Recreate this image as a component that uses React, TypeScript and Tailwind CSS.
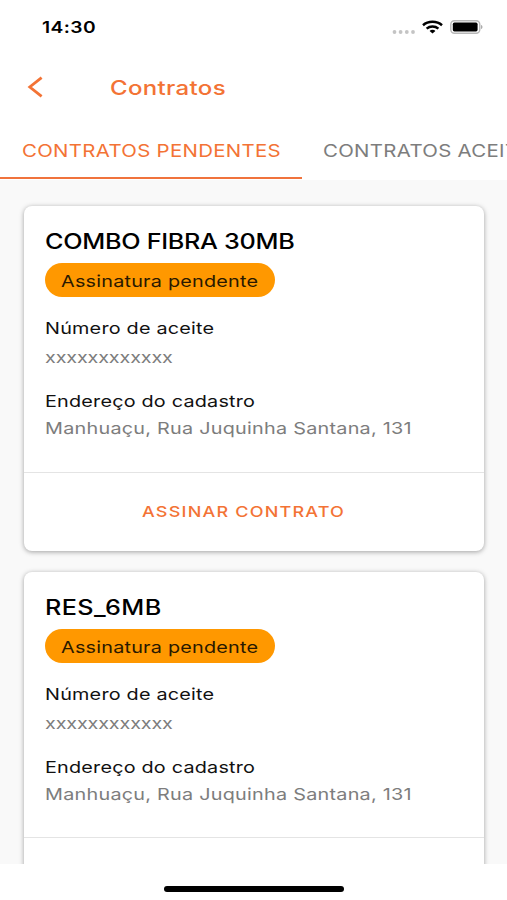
// File: src/features/contracts/ContractsPage.tsx
/**
 * What it does:
 * Shows the customer's contracts, split in "pendentes" and "aceitos".
 *
 * How it works:
 * - 'ContractsPage' keeps the active tab in state.
 * - 'ContractCard' renders one contract with its sign button.
 * - 'Wide' stretches a text horizontally (the app's wide typeface).
 */

import { useState } from "react";
import type { ReactNode } from "react";

// --- Types ---
type Contract = {
  id: number;
  name: string;
  nameClass: string;
  status: string;
  acceptanceNumber: string;
  address: string;
};

type WideProps = {
  children: ReactNode;
  className?: string;
};

// --- Data ---
const contracts: Contract[] = [
  {
    id: 1,
    name: "COMBO FIBRA 30MB",
    nameClass: "tracking-[-0.24px]",
    status: "Assinatura pendente",
    acceptanceNumber: "xxxxxxxxxxxx",
    address: "Manhuaçu, Rua Juquinha Santana, 131",
  },
  {
    id: 2,
    name: "RES_6MB",
    nameClass: "tracking-[0.35px]",
    status: "Assinatura pendente",
    acceptanceNumber: "xxxxxxxxxxxx",
    address: "Manhuaçu, Rua Juquinha Santana, 131",
  },
];

// --- Helpers ---
const Wide = ({ children, className = "" }: WideProps) => (
  <span
    className={`inline-block origin-left scale-x-[1.2] whitespace-nowrap ${className}`}
  >
    {children}
  </span>
);

const StatusBar = () => (
  <div className="flex h-[55px] shrink-0 items-center pl-[41.5px] pr-[24px]">
    <Wide className="-mt-px text-[16px] font-semibold tracking-[0.35px]">14:30</Wide>
    <div className="-mt-px ml-auto flex items-center">
      <svg width="24" height="4" viewBox="0 0 24 4" className="mt-[9px]" fill="#c4c4c4">
        <circle cx="2.5" cy="2" r="1.9" />
        <circle cx="8.6" cy="2" r="1.9" />
        <circle cx="14.8" cy="2" r="1.9" />
        <circle cx="21" cy="2" r="1.9" />
      </svg>
      <svg
        width="21"
        height="14"
        viewBox="0 0 21 14"
        className="ml-[6px]"
        fill="none"
        stroke="#000"
        strokeWidth="2.5"
      >
        <path d="M1 5.2C6.2 0.6 14.8 0.6 20 5.2" />
        <path d="M4.6 8.6C8 5.7 13 5.7 16.4 8.6" />
        <path d="M7.6 10.9C9 9.4 12 9.4 13.4 10.9L10.5 13.6Z" fill="#000" stroke="none" />
      </svg>
      <svg width="33" height="14" viewBox="0 0 33 14" className="ml-[7px]">
        <rect x="0.8" y="0.8" width="29" height="12.4" rx="3.6" fill="#fff" stroke="#b8b8b8" strokeWidth="1.4" />
        <rect x="2.8" y="2.6" width="24.8" height="8.8" rx="1.6" fill="#000" />
        <path d="M31.2 5C32.8 5.4 32.8 8.6 31.2 9Z" fill="#999" />
      </svg>
    </div>
  </div>
);

const ContractCard = ({ contract }: { contract: Contract }) => (
  <article className="shrink-0 rounded-[8px] bg-white shadow-[0_1px_5px_rgba(0,0,0,0.36)]">
    <div className="flex h-[266.5px] flex-col items-start border-b border-[#e4e4e4] pl-[21px] pt-[24px] leading-6">
      <h2 className="h-6 text-[21px] font-medium text-black">
        <Wide className={contract.nameClass}>{contract.name}</Wide>
      </h2>
      <div className="mt-[9px] flex h-[34px] w-[230px] items-center rounded-full bg-[#ff9800] pl-[16px] pt-[2px] text-[16.5px] text-[#2a1900]">
        <Wide className="tracking-[0.18px]">{contract.status}</Wide>
      </div>
      <p className="mt-[19px] h-6 text-[16.5px] text-[#111]">
        <Wide className="tracking-[0.18px]">Número de aceite</Wide>
      </p>
      <p className="mt-[5px] h-6 text-[16.5px] text-[#7d7d7d]">
        <Wide className="tracking-[-0.14px]">{contract.acceptanceNumber}</Wide>
      </p>
      <p className="mt-[20px] h-6 text-[16.5px] text-[#111]">
        <Wide className="tracking-[0.17px]">Endereço do cadastro</Wide>
      </p>
      <p className="mt-[3px] h-6 text-[16.5px] text-[#7d7d7d]">
        <Wide className="tracking-[0.21px]">{contract.address}</Wide>
      </p>
    </div>
    <button
      type="button"
      className="flex h-[78.5px] w-full items-center pl-[117.5px] pt-px text-[15px] font-medium text-[#f37335]"
    >
      <Wide className="tracking-[1px]">ASSINAR CONTRATO</Wide>
    </button>
  </article>
);

// --- Main Component ---
const ContractsPage = () => {
  const [activeTab, setActiveTab] = useState<"pending" | "accepted">("pending");

  return (
    <div className="flex h-[900px] w-[507px] flex-col overflow-hidden bg-white font-['Inter','Liberation_Sans',sans-serif]">
      <StatusBar />

      <header className="flex h-[64px] shrink-0 items-center pl-[27px] text-[#f37335]">
        <button type="button" aria-label="Voltar">
          <svg
            width="17"
            height="22"
            viewBox="0 0 17 22"
            fill="none"
            stroke="currentColor"
            strokeWidth="2.8"
          >
            <path d="M14.6 1.6L2.8 11L14.6 20.4" />
          </svg>
        </button>
        <h1 className="ml-[66px] pt-px text-[20px] font-medium">
          <Wide className="tracking-[0.28px]">Contratos</Wide>
        </h1>
      </header>

      <nav className="flex h-[61px] shrink-0 overflow-hidden text-[17px]">
        <button
          type="button"
          onClick={() => setActiveTab("pending")}
          className={`flex h-[60px] w-[302px] shrink-0 items-center border-b-2 pl-[22px] pt-[7px] ${
            activeTab === "pending"
              ? "border-[#f0733c] text-[#f37335]"
              : "border-transparent text-[#7d7d7d]"
          }`}
        >
          <Wide className="tracking-[0.26px]">CONTRATOS PENDENTES</Wide>
        </button>
        <button
          type="button"
          onClick={() => setActiveTab("accepted")}
          className={`flex h-[60px] w-[280px] shrink-0 items-center border-b-2 pl-[21px] pt-[7px] ${
            activeTab === "accepted"
              ? "border-[#f0733c] text-[#f37335]"
              : "border-transparent text-[#7d7d7d]"
          }`}
        >
          <Wide className="tracking-[0.26px]">CONTRATOS ACEITOS</Wide>
        </button>
      </nav>

      <main className="flex min-h-0 flex-1 flex-col gap-[20.6px] overflow-hidden bg-[#f9f9f9] pl-[24px] pr-[23px] pt-[26px]">
        {contracts.map((contract) => (
          <ContractCard key={contract.id} contract={contract} />
        ))}
      </main>

      <footer className="flex h-[36px] shrink-0 justify-center bg-white pl-px pt-[22px]">
        <div className="h-[6px] w-[180px] rounded-full bg-black" />
      </footer>
    </div>
  );
};

export default ContractsPage;
